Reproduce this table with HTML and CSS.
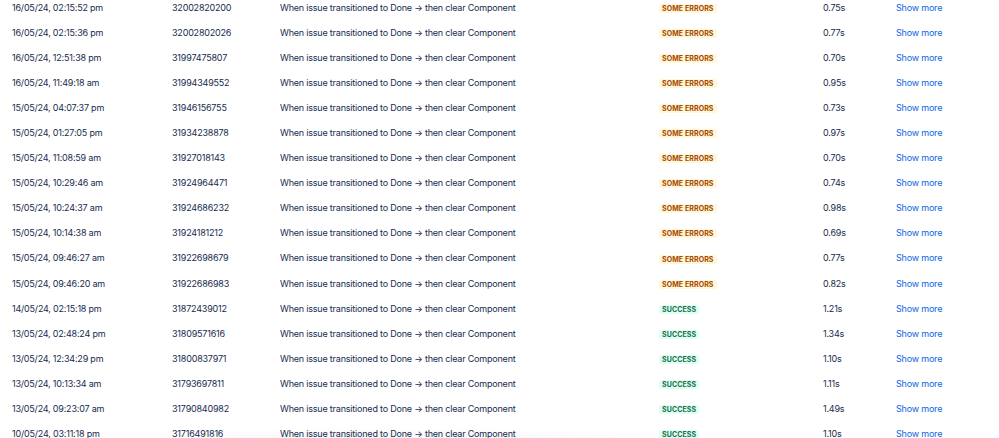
FILE: index.html
```html
<!DOCTYPE html>
<html lang="en">
<head>
<meta charset="utf-8">
<title>Audit log</title>
<link rel="stylesheet" href="styles.css">
</head>
<body>
<div class="viewport">
  <div class="table">
    <div class="row"><span>16/05/24, 02:15:52 pm</span><span>32002820200</span><span>When issue transitioned to Done → then clear Component</span><span><em class="loz warn">Some errors</em></span><span>0.75s</span><a href="#">Show more</a></div>
    <div class="row"><span>16/05/24, 02:15:36 pm</span><span>32002802026</span><span>When issue transitioned to Done → then clear Component</span><span><em class="loz warn">Some errors</em></span><span>0.77s</span><a href="#">Show more</a></div>
    <div class="row"><span>16/05/24, 12:51:38 pm</span><span>31997475807</span><span>When issue transitioned to Done → then clear Component</span><span><em class="loz warn">Some errors</em></span><span>0.70s</span><a href="#">Show more</a></div>
    <div class="row"><span>16/05/24, 11:49:18 am</span><span>31994349552</span><span>When issue transitioned to Done → then clear Component</span><span><em class="loz warn">Some errors</em></span><span>0.95s</span><a href="#">Show more</a></div>
    <div class="row"><span>15/05/24, 04:07:37 pm</span><span>31946156755</span><span>When issue transitioned to Done → then clear Component</span><span><em class="loz warn">Some errors</em></span><span>0.73s</span><a href="#">Show more</a></div>
    <div class="row"><span>15/05/24, 01:27:05 pm</span><span>31934238878</span><span>When issue transitioned to Done → then clear Component</span><span><em class="loz warn">Some errors</em></span><span>0.97s</span><a href="#">Show more</a></div>
    <div class="row"><span>15/05/24, 11:08:59 am</span><span>31927018143</span><span>When issue transitioned to Done → then clear Component</span><span><em class="loz warn">Some errors</em></span><span>0.70s</span><a href="#">Show more</a></div>
    <div class="row"><span>15/05/24, 10:29:46 am</span><span>31924964471</span><span>When issue transitioned to Done → then clear Component</span><span><em class="loz warn">Some errors</em></span><span>0.74s</span><a href="#">Show more</a></div>
    <div class="row"><span>15/05/24, 10:24:37 am</span><span>31924686232</span><span>When issue transitioned to Done → then clear Component</span><span><em class="loz warn">Some errors</em></span><span>0.98s</span><a href="#">Show more</a></div>
    <div class="row"><span>15/05/24, 10:14:38 am</span><span>31924181212</span><span>When issue transitioned to Done → then clear Component</span><span><em class="loz warn">Some errors</em></span><span>0.69s</span><a href="#">Show more</a></div>
    <div class="row"><span>15/05/24, 09:46:27 am</span><span>31922698679</span><span>When issue transitioned to Done → then clear Component</span><span><em class="loz warn">Some errors</em></span><span>0.77s</span><a href="#">Show more</a></div>
    <div class="row"><span>15/05/24, 09:46:20 am</span><span>31922686983</span><span>When issue transitioned to Done → then clear Component</span><span><em class="loz warn">Some errors</em></span><span>0.82s</span><a href="#">Show more</a></div>
    <div class="row"><span>14/05/24, 02:15:18 pm</span><span>31872439012</span><span>When issue transitioned to Done → then clear Component</span><span><em class="loz ok">Success</em></span><span>1.21s</span><a href="#">Show more</a></div>
    <div class="row"><span>13/05/24, 02:48:24 pm</span><span>31809571616</span><span>When issue transitioned to Done → then clear Component</span><span><em class="loz ok">Success</em></span><span>1.34s</span><a href="#">Show more</a></div>
    <div class="row"><span>13/05/24, 12:34:29 pm</span><span>31800837971</span><span>When issue transitioned to Done → then clear Component</span><span><em class="loz ok">Success</em></span><span>1.10s</span><a href="#">Show more</a></div>
    <div class="row"><span>13/05/24, 10:13:34 am</span><span>31793697811</span><span>When issue transitioned to Done → then clear Component</span><span><em class="loz ok">Success</em></span><span>1.11s</span><a href="#">Show more</a></div>
    <div class="row"><span>13/05/24, 09:23:07 am</span><span>31790840982</span><span>When issue transitioned to Done → then clear Component</span><span><em class="loz ok">Success</em></span><span>1.49s</span><a href="#">Show more</a></div>
    <div class="row"><span>10/05/24, 03:11:18 pm</span><span>31716491816</span><span>When issue transitioned to Done → then clear Component</span><span><em class="loz ok">Success</em></span><span>1.10s</span><a href="#">Show more</a></div>
  </div>
  <div class="fade"></div>
</div>
</body>
</html>
```
FILE: styles.css
```css
html, body {
  margin: 0;
  padding: 0;
  background: #ffffff;
}
body {
  font-family: Inter, "Noto Sans", "Liberation Sans", sans-serif;
  font-size: 9px;
  letter-spacing: -0.2px;
  color: #172b4d;
  overflow: hidden;
}
.viewport {
  position: relative;
  height: 438px;
  overflow: hidden;
}
.table {
  margin-top: -5px;
  padding-left: 12px;
}
.row {
  display: grid;
  grid-template-columns: 160px 108px 379px 164px 73px 1fr;
  height: 25.05px;
  align-items: center;
  white-space: nowrap;
}
.row a {
  color: #0c66e4;
  text-decoration: none;
}
.loz {
  display: inline-block;
  font-style: normal;
  font-weight: 700;
  font-size: 7px;
  letter-spacing: 0.1px;
  text-transform: uppercase;
  line-height: 9px;
  padding: 0 3px;
  border-radius: 2px;
  vertical-align: middle;
}
.loz.warn {
  background: #fff7d6;
  color: #a54800;
}
.loz.ok {
  background: #dcfff1;
  color: #216e4e;
}
.fade {
  position: absolute;
  left: 100px;
  right: 300px;
  bottom: -20px;
  height: 30px;
  background: radial-gradient(ellipse at center, rgba(9, 30, 66, 0.06), rgba(9, 30, 66, 0) 70%);
  pointer-events: none;
}
```
